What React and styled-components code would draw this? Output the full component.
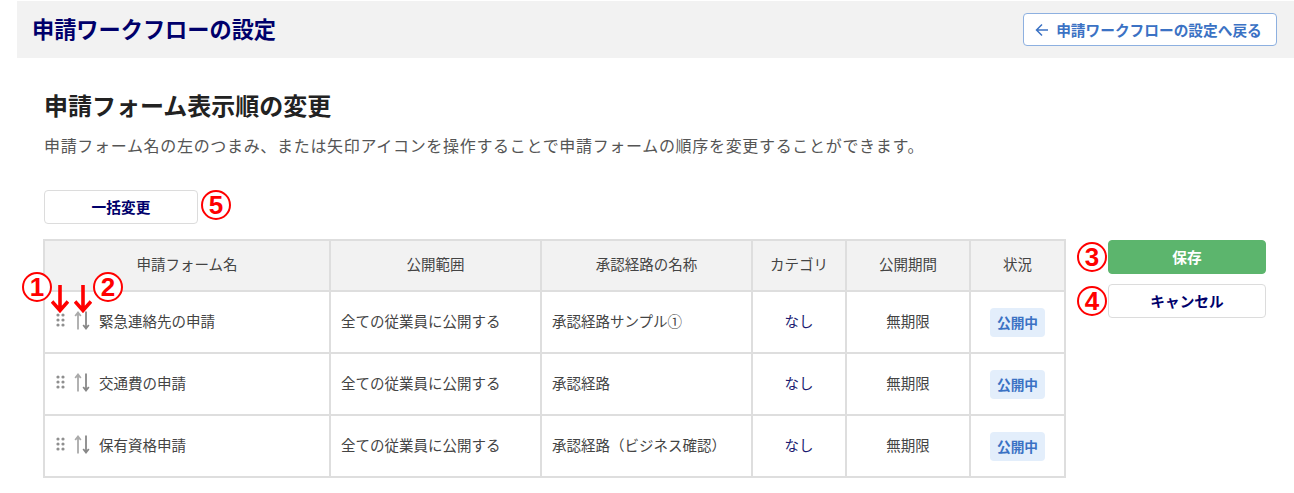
import React from "react";
import styled, { createGlobalStyle } from "styled-components";

const Global = createGlobalStyle`
  html, body { margin: 0; padding: 0; background: #fff; }
  body { font-family: "Noto Sans CJK JP", "Noto Sans", sans-serif; color: #444; }
  * { box-sizing: border-box; }
`;

const Page = styled.div`
  width: 1294px;
  height: 493px;
  padding: 1px 0 0 17px;
  overflow: hidden;
`;
const Header = styled.header`
  height: 57px;
  background: #f2f2f2;
  display: flex;
  align-items: center;
  justify-content: space-between;
  padding: 0 17px 0 15px;
`;
const PageTitle = styled.h1`
  margin: 0 0 2px;
  font-size: 22.2px;
  line-height: 1;
  font-weight: 700;
  color: #00006b;
`;
const BackButton = styled.button`
  width: 254px;
  height: 33px;
  display: flex;
  align-items: center;
  justify-content: center;
  gap: 7px;
  background: #fff;
  border: 1px solid #8db0e0;
  border-radius: 4px;
  color: #3b72c4;
  font: 700 14.7px "Noto Sans CJK JP", sans-serif;
  padding: 0 3px 0 0;
`;
const Main = styled.main`
  padding: 33px 0 0 27px;
`;
const Heading = styled.h2`
  margin: 0;
  font-size: 24px;
  line-height: 28px;
  font-weight: 700;
  color: #222;
`;
const Description = styled.p`
  margin: 14px 0 0;
  font-size: 16px;
  line-height: 24px;
  letter-spacing: 0.68px;
  color: #555;
`;
const BulkRow = styled.div`
  margin-top: 33px;
  display: flex;
  align-items: flex-start;
  gap: 3px;
  height: 34px;
`;
const Button = styled.button`
  width: ${p => p.$w || 158}px;
  height: 34px;
  border-radius: 4px;
  border: 1px solid ${p => (p.$primary ? "#5cb56d" : "#dcdcdc")};
  background: ${p => (p.$primary ? "#5cb56d" : "#fff")};
  color: ${p => (p.$primary ? "#fff" : "#00006b")};
  font: 700 14.7px "Noto Sans CJK JP", sans-serif;
  padding: 0 0 2px;
`;
const Circled = styled.span`
  width: 30px;
  height: 30px;
  flex: none;
  border: 2px solid #f00;
  border-radius: 50%;
  color: #f00;
  font: 700 26px/26px "Liberation Sans", sans-serif;
  text-align: center;
  background: #fff;
`;
const Workspace = styled.div`
  margin-top: 16px;
  display: flex;
  align-items: flex-start;
  gap: 11px;
`;
const TableWrap = styled.div`
  position: relative;
  width: 1022px;
`;
const Table = styled.table`
  width: 1021px;
  margin: -1px 0 0 -1px;
  border-collapse: collapse;
  table-layout: fixed;
  font-size: 14.5px;
  color: #444;
`;
const Th = styled.th`
  height: 51px;
  padding: 0 0 5px;
  background: #f2f2f2;
  border: 2px solid #dedede;
  font-weight: 400;
  text-align: center;
`;
const Td = styled.td`
  height: 62px;
  padding: 0 10px 4px;
  border: 2px solid #dedede;
  text-align: ${p => (p.$center ? "center" : "left")};
  color: ${p => (p.$navy ? "#1a1a70" : "#444")};
`;
const NameCell = styled.div`
  display: flex;
  align-items: center;
  gap: 9px;
`;
const Badge = styled.span`
  display: inline-block;
  width: 55px;
  height: 29px;
  margin-top: 4px;
  line-height: 29px;
  border-radius: 4px;
  background: #e3eefb;
  color: #3b72c4;
  font-size: 13.7px;
  font-weight: 700;
  text-align: center;
`;
const Side = styled.div`
  display: grid;
  grid-template-columns: 30px 158px;
  column-gap: 1px;
  row-gap: 10px;
  align-items: center;
`;
const Overlay = styled.div`
  position: absolute;
  left: ${p => p.$x}px;
  top: ${p => p.$y}px;
  display: flex;
`;

const Grip = () => (
  <svg width="10" height="14" viewBox="0 0 10 14" fill="#8f8f8f">
    {[2, 7, 12].flatMap(y => [3, 8].map(x => <circle key={x + "-" + y} cx={x} cy={y} r="1.6" />))}
  </svg>
);
const SortIcon = () => (
  <svg width="16" height="19" viewBox="0 0 16 19" fill="none" strokeWidth="1.8">
    <path d="M4 18.5V2M1.2 5L4 1.5 6.8 5" stroke="#aaa" />
    <path d="M12 .5V17M9.2 14l2.8 3.5 2.8-3.5" stroke="#888" />
  </svg>
);
const RedArrow = () => (
  <svg width="18" height="28" viewBox="0 0 18 28" fill="none" stroke="#f00" strokeWidth="3.6">
    <path d="M9 0v25M1 16.5L9 25.5l8-9" />
  </svg>
);
const ArrowLeft = () => (
  <svg width="14" height="14" viewBox="0 0 14 14" fill="none" stroke="#3b72c4" strokeWidth="1.5">
    <path d="M13 7H2M7 1.5L1.5 7 7 12.5" />
  </svg>
);

const rows = [
  ["緊急連絡先の申請", "承認経路サンプル①"],
  ["交通費の申請", "承認経路"],
  ["保有資格申請", "承認経路（ビジネス確認）"],
];
const cols = [286, 211, 211, 94, 124, 95];
const heads = ["申請フォーム名", "公開範囲", "承認経路の名称", "カテゴリ", "公開期間", "状況"];

export default function App() {
  return (
    <>
      <Global />
      <Page>
        <Header>
          <PageTitle>申請ワークフローの設定</PageTitle>
          <BackButton><ArrowLeft />申請ワークフローの設定へ戻る</BackButton>
        </Header>
        <Main>
          <Heading>申請フォーム表示順の変更</Heading>
          <Description>申請フォーム名の左のつまみ、または矢印アイコンを操作することで申請フォームの順序を変更することができます。</Description>
          <BulkRow>
            <Button $w={154}>一括変更</Button>
            <Circled>5</Circled>
          </BulkRow>
          <Workspace>
            <TableWrap>
              <Table>
                <colgroup>{cols.map((w, i) => <col key={i} style={{ width: w }} />)}</colgroup>
                <thead>
                  <tr>{heads.map(h => <Th key={h}>{h}</Th>)}</tr>
                </thead>
                <tbody>
                  {rows.map(([name, route]) => (
                    <tr key={name}>
                      <Td>
                        <NameCell><Grip /><SortIcon />{name}</NameCell>
                      </Td>
                      <Td>全ての従業員に公開する</Td>
                      <Td>{route}</Td>
                      <Td $center $navy>なし</Td>
                      <Td $center>無期限</Td>
                      <Td $center><Badge>公開中</Badge></Td>
                    </tr>
                  ))}
                </tbody>
              </Table>
              <Overlay $x={-22} $y={32}><Circled>1</Circled></Overlay>
              <Overlay $x={49} $y={32}><Circled>2</Circled></Overlay>
              <Overlay $x={7} $y={45}><RedArrow /></Overlay>
              <Overlay $x={30} $y={45}><RedArrow /></Overlay>
            </TableWrap>
            <Side>
              <Circled>3</Circled>
              <Button $primary>保存</Button>
              <Circled>4</Circled>
              <Button>キャンセル</Button>
            </Side>
          </Workspace>
        </Main>
      </Page>
    </>
  );
}
